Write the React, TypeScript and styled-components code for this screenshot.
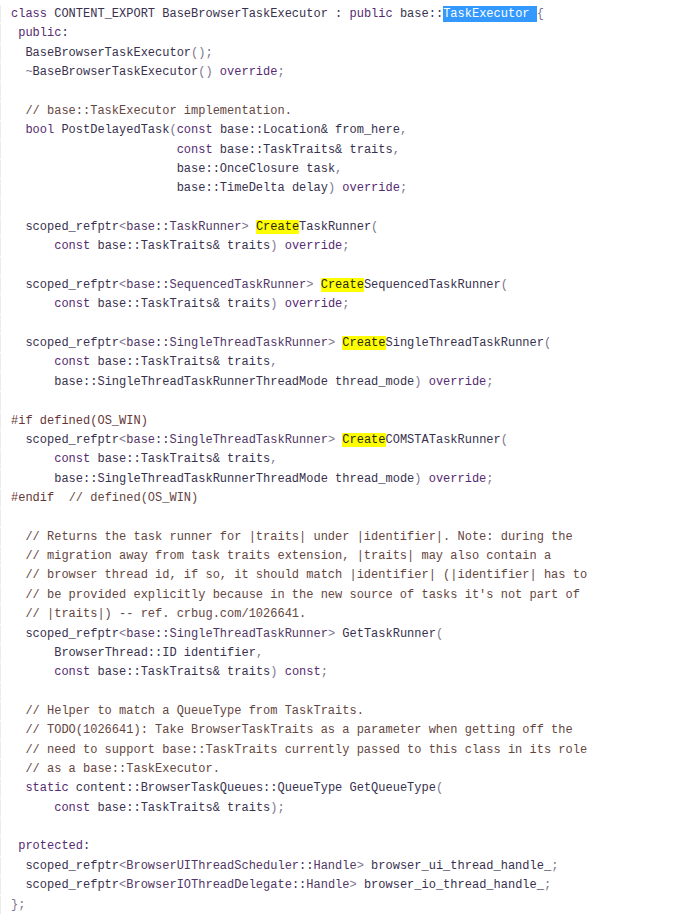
import React from "react";
import styled, { createGlobalStyle } from "styled-components";

const Global = createGlobalStyle`
  html, body { margin: 0; padding: 0; background: #ffffff; }
  body { font-family: "Liberation Mono", "DejaVu Sans Mono", monospace; }
`;

const Listing = styled.div`
  display: flex;
  flex-direction: column;
  gap: 1px;
  padding: 5px 0 6px 0;
  font-family: "Liberation Mono", "DejaVu Sans Mono", monospace;
  font-size: 12px;
  color: #3a3250;
`;

const Line = styled.div`
  height: 18.37px;
  line-height: 18.37px;
  padding-left: 10px;
  border-left: 1px solid #ececec;
  white-space: pre;
`;

type Kind = "kw" | "cm" | "pp" | "pn" | "id" | "ty";

const Tok = styled.span<{ $kind: Kind }>`
  color: ${(p) =>
    p.$kind === "kw"
      ? "#552a72"
      : p.$kind === "cm"
      ? "#65463f"
      : p.$kind === "pp"
      ? "#663636"
      : p.$kind === "pn"
      ? "#807590"
      : p.$kind === "ty"
      ? "#513666"
      : "#38314e"};
`;

const Mark = styled.span`
  background: #ffff00;
  color: #2a2618;
`;

const Selection = styled.span`
  background: #3399ff;
  color: #ffffff;
  padding: 1px 0;
`;

const KEYWORDS = new Set([
  "class",
  "public",
  "protected",
  "const",
  "override",
  "bool",
  "static",
]);

const SOURCE: string[] = [
  "class CONTENT_EXPORT BaseBrowserTaskExecutor : public base::⟪TaskExecutor ⟫{",
  " public:",
  "  BaseBrowserTaskExecutor();",
  "  ~BaseBrowserTaskExecutor() override;",
  "",
  "  // base::TaskExecutor implementation.",
  "  bool PostDelayedTask(const base::Location& from_here,",
  "                       const base::TaskTraits& traits,",
  "                       base::OnceClosure task,",
  "                       base::TimeDelta delay) override;",
  "",
  "  scoped_refptr<base::TaskRunner> ⟦Create⟧TaskRunner(",
  "      const base::TaskTraits& traits) override;",
  "",
  "  scoped_refptr<base::SequencedTaskRunner> ⟦Create⟧SequencedTaskRunner(",
  "      const base::TaskTraits& traits) override;",
  "",
  "  scoped_refptr<base::SingleThreadTaskRunner> ⟦Create⟧SingleThreadTaskRunner(",
  "      const base::TaskTraits& traits,",
  "      base::SingleThreadTaskRunnerThreadMode thread_mode) override;",
  "",
  "#if defined(OS_WIN)",
  "  scoped_refptr<base::SingleThreadTaskRunner> ⟦Create⟧COMSTATaskRunner(",
  "      const base::TaskTraits& traits,",
  "      base::SingleThreadTaskRunnerThreadMode thread_mode) override;",
  "#endif  // defined(OS_WIN)",
  "",
  "  // Returns the task runner for |traits| under |identifier|. Note: during the",
  "  // migration away from task traits extension, |traits| may also contain a",
  "  // browser thread id, if so, it should match |identifier| (|identifier| has to",
  "  // be provided explicitly because in the new source of tasks it's not part of",
  "  // |traits|) -- ref. crbug.com/1026641.",
  "  scoped_refptr<base::SingleThreadTaskRunner> GetTaskRunner(",
  "      BrowserThread::ID identifier,",
  "      const base::TaskTraits& traits) const;",
  "",
  "  // Helper to match a QueueType from TaskTraits.",
  "  // TODO(1026641): Take BrowserTaskTraits as a parameter when getting off the",
  "  // need to support base::TaskTraits currently passed to this class in its role",
  "  // as a base::TaskExecutor.",
  "  static content::BrowserTaskQueues::QueueType GetQueueType(",
  "      const base::TaskTraits& traits);",
  "",
  " protected:",
  "  scoped_refptr<BrowserUIThreadScheduler::Handle> browser_ui_thread_handle_;",
  "  scoped_refptr<BrowserIOThreadDelegate::Handle> browser_io_thread_handle_;",
  "};",
];

function tokenize(text: string, keyBase: string, preproc: boolean): React.ReactNode[] {
  const out: React.ReactNode[] = [];
  const re = /(\/\/.*$)|(#\w+)|([A-Za-z_]\w*)|(\s+)|([^\sA-Za-z_])/g;
  let m: RegExpExecArray | null;
  let i = 0;
  let inAngle = false;
  while ((m = re.exec(text)) !== null) {
    const k = `${keyBase}-${i++}`;
    if (m[1]) {
      out.push(
        <Tok key={k} $kind="cm">
          {m[1]}
        </Tok>
      );
    } else if (m[2]) {
      out.push(
        <Tok key={k} $kind="pp">
          {m[2]}
        </Tok>
      );
    } else if (m[3]) {
      const word = m[3];
      const kind: Kind = preproc
        ? "pp"
        : KEYWORDS.has(word)
        ? "kw"
        : inAngle
        ? "ty"
        : "id";
      out.push(
        <Tok key={k} $kind={kind}>
          {word}
        </Tok>
      );
    } else if (m[4]) {
      out.push(m[4]);
    } else if (m[5]) {
      const ch = m[5];
      if (ch === "<") inAngle = true;
      if (ch === ">") inAngle = false;
      const kind: Kind = preproc ? "pp" : ch === ":" || ch === "&" ? "id" : "pn";
      out.push(
        <Tok key={k} $kind={kind}>
          {ch}
        </Tok>
      );
    }
  }
  return out;
}

function renderLine(src: string, idx: number): React.ReactNode[] {
  const preproc = src.startsWith("#");
  const parts = src.split(/(⟦[^⟧]*⟧|⟪[^⟫]*⟫)/);
  const out: React.ReactNode[] = [];
  parts.forEach((part, pi) => {
    if (!part) return;
    const key = `${idx}-${pi}`;
    if (part.startsWith("⟦")) {
      out.push(<Mark key={key}>{part.slice(1, -1)}</Mark>);
    } else if (part.startsWith("⟪")) {
      out.push(<Selection key={key}>{part.slice(1, -1)}</Selection>);
    } else {
      out.push(...tokenize(part, key, preproc));
    }
  });
  return out;
}

export default function App() {
  return (
    <>
      <Global />
      <Listing>
        {SOURCE.map((src, i) => (
          <Line key={i}>{src === "" ? " " : renderLine(src, i)}</Line>
        ))}
      </Listing>
    </>
  );
}
